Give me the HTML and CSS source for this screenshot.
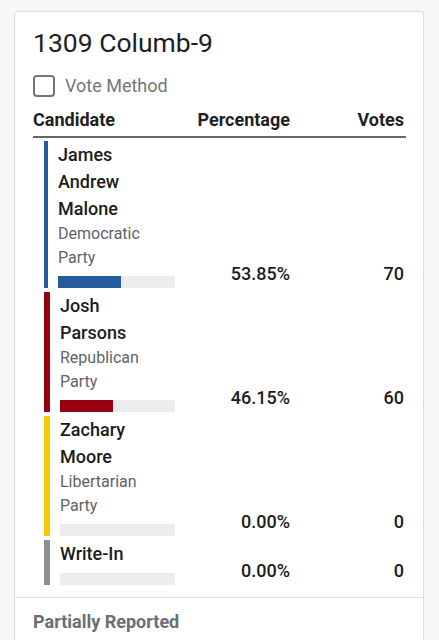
FILE: index.html
```html
<!DOCTYPE html>
<html lang="en">
<head>
<meta charset="utf-8">
<title>1309 Columb-9</title>
<link rel="stylesheet" href="styles.css">
</head>
<body>
<div class="card">
  <div class="main">
    <h1 class="title">1309 Columb-9</h1>
    <label class="method"><span class="box"></span><span class="method-text">Vote Method</span></label>
    <div class="results">
      <div class="head">Candidate</div>
      <div class="head num">Percentage</div>
      <div class="head num votes">Votes</div>

      <div class="cand dem">
        <div class="name">James Andrew Malone</div>
        <div class="party">Democratic Party</div>
        <div class="bar"><div class="fill" style="width:53.85%"></div></div>
      </div>
      <div class="num val">53.85%</div>
      <div class="num val votes">70</div>

      <div class="cand rep">
        <div class="name">Josh Parsons</div>
        <div class="party">Republican Party</div>
        <div class="bar"><div class="fill" style="width:46.15%"></div></div>
      </div>
      <div class="num val">46.15%</div>
      <div class="num val votes">60</div>

      <div class="cand lib">
        <div class="name">Zachary Moore</div>
        <div class="party">Libertarian Party</div>
        <div class="bar"><div class="fill" style="width:0%"></div></div>
      </div>
      <div class="num val">0.00%</div>
      <div class="num val votes">0</div>

      <div class="cand wri">
        <div class="name">Write-In</div>
        <div class="bar"><div class="fill" style="width:0%"></div></div>
      </div>
      <div class="num val">0.00%</div>
      <div class="num val votes">0</div>
    </div>
  </div>
  <div class="footer">Partially Reported</div>
</div>
</body>
</html>
```

FILE: styles.css
```css
* { box-sizing: border-box; }
html, body { margin: 0; padding: 0; }
body {
  background: #f7f7f7;
  font-family: Roboto, "Liberation Sans", sans-serif;
  color: #222;
  height: 640px;
  overflow: hidden;
}
.card {
  margin: 11px 0 0 14px;
  width: 410px;
  background: #fff;
  border: 1px solid #dcdcdc;
  border-radius: 3px;
}
.main {
  padding: 15px 17px 12px 18px;
}
.title {
  margin: 0;
  font-size: 26.5px;
  font-weight: 400;
  line-height: 32px;
  color: #1e1e1e;
}
.method {
  display: flex;
  align-items: center;
  margin-top: 16px;
}
.box {
  width: 22px;
  height: 22px;
  border: 2px solid #757575;
  border-radius: 4px;
}
.method-text {
  margin-left: 10px;
  font-size: 18px;
  color: #767676;
  line-height: 22px;
}
.results {
  display: grid;
  grid-template-columns: 163px 94px 1fr;
  row-gap: 4px;
  margin-top: 11px;
}
.head {
  font-size: 18px;
  font-weight: 700;
  line-height: 24px;
  padding-bottom: 4px;
  border-bottom: 2px solid #666;
  margin-bottom: -1px;
  color: #1f1f1f;
}
.num { text-align: right; }
.votes { padding-right: 2px; }
.cand {
  margin-left: 11px;
  border-left: 6px solid #999;
  padding-left: 10px;
}
.cand.dem { border-left: 4px solid #255b9d; }
.cand.rep { border-left-color: #98000f; }
.cand.lib { border-left-color: #f6c900; }
.cand.wri { border-left-color: #8d8e93; }
.name {
  width: 100px;
  font-size: 18px;
  font-weight: 500;
  line-height: 27px;
  color: #1c1c1c;
}
.party {
  width: 100px;
  font-size: 16px;
  line-height: 24px;
  color: #5f6368;
}
.bar {
  margin-top: 6px;
  width: 115px;
  height: 12px;
  background: #ececec;
}
.dem .bar { width: 117px; }
.fill { height: 100%; }
.dem .fill { background: #255b9d; }
.rep .fill { background: #98000f; }
.lib .fill { background: #f6c900; }
.wri .fill { background: #8d8e93; }
.val {
  align-self: end;
  margin-bottom: 4px;
  font-size: 18px;
  font-weight: 500;
  line-height: 20px;
  color: #1c1c1c;
}
.footer {
  border-top: 1px solid #dcdcdc;
  padding: 12px 18px 20px;
  font-size: 18px;
  font-weight: 700;
  line-height: 24px;
  color: #6b6e74;
}
```
